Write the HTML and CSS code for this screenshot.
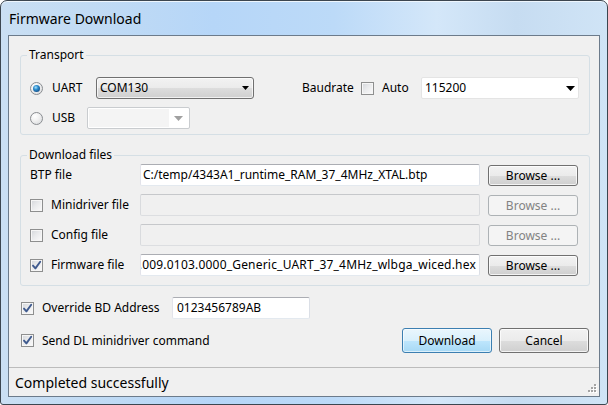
FILE: index.html
```html
<!DOCTYPE html>
<html>
<head>
<meta charset="utf-8">
<title>Firmware Download</title>
<link rel="stylesheet" href="styles.css">
</head>
<body>
<div class="window">
  <div class="titlebar"><span class="title">Firmware Download</span></div>
  <div class="client">
    <div class="content">
      <fieldset class="group transport">
        <legend>Transport</legend>
        <div class="inner">
          <div class="row">
            <span class="radio checked"></span>
            <span class="lbl lbl-uart">UART</span>
            <div class="combo combo-com"><span class="ctext">COM130</span><svg class="arrow" width="7" height="4" viewBox="0 0 7 4"><path d="M0 0h7L3.5 4z" fill="#000"/></svg></div>
            <span class="spacer"></span>
            <span class="lbl lbl-baud">Baudrate</span>
            <span class="check"></span>
            <span class="lbl lbl-auto">Auto</span>
            <div class="combo combo-edit"><span class="ctext">115200</span><svg class="arrow" width="9" height="5" viewBox="0 0 9 5"><path d="M0 0h9L4.5 5z" fill="#000"/></svg></div>
          </div>
          <div class="row">
            <span class="radio"></span>
            <span class="lbl lbl-usb">USB</span>
            <div class="combo combo-dis"><span class="cfield"></span><span class="cbtn"><svg width="9" height="5" viewBox="0 0 9 5"><path d="M0 0h9L4.5 5z" fill="#a0a0a0"/></svg></span></div>
          </div>
        </div>
      </fieldset>

      <fieldset class="group files">
        <legend>Download files</legend>
        <div class="inner">
          <div class="row">
            <span class="flabel"><span class="lbl">BTP file</span></span>
            <div class="input">C:/temp/4343A1_runtime_RAM_37_4MHz_XTAL.btp</div>
            <button class="btn">Browse ...</button>
          </div>
          <div class="row">
            <span class="flabel"><span class="check"></span><span class="lbl">Minidriver file</span></span>
            <div class="input disabled"></div>
            <button class="btn" disabled>Browse ...</button>
          </div>
          <div class="row">
            <span class="flabel"><span class="check"></span><span class="lbl">Config file</span></span>
            <div class="input disabled"></div>
            <button class="btn" disabled>Browse ...</button>
          </div>
          <div class="row">
            <span class="flabel"><span class="check checked"><svg width="11" height="11" viewBox="0 0 11 11"><path d="M2 5.6 4.4 8.4 9.2 1.8" fill="none" stroke="#3f5a8e" stroke-width="1.9" stroke-linejoin="round" stroke-linecap="round"/></svg></span><span class="lbl">Firmware file</span></span>
            <div class="input scrolled"><span>001.009.0103.0000_Generic_UART_37_4MHz_wlbga_wiced.hex</span></div>
            <button class="btn">Browse ...</button>
          </div>
        </div>
      </fieldset>

      <div class="row opt">
        <span class="check checked"><svg width="11" height="11" viewBox="0 0 11 11"><path d="M2 5.6 4.4 8.4 9.2 1.8" fill="none" stroke="#3f5a8e" stroke-width="1.9" stroke-linejoin="round" stroke-linecap="round"/></svg></span>
        <span class="lbl lbl-override">Override BD Address</span>
        <div class="input bd">0123456789AB</div>
      </div>

      <div class="row actions">
        <span class="check checked"><svg width="11" height="11" viewBox="0 0 11 11"><path d="M2 5.6 4.4 8.4 9.2 1.8" fill="none" stroke="#3f5a8e" stroke-width="1.9" stroke-linejoin="round" stroke-linecap="round"/></svg></span>
        <span class="lbl">Send DL minidriver command</span>
        <span class="spacer"></span>
        <button class="btn big default">Download</button>
        <button class="btn big">Cancel</button>
      </div>
    </div>
    <div class="statusbar">
      <span class="status">Completed successfully</span>
      <svg class="grip" width="12" height="12" viewBox="0 0 12 12">
        <g fill="#fff"><rect x="10" y="2" width="2" height="2"/><rect x="7" y="5" width="2" height="2"/><rect x="10" y="5" width="2" height="2"/><rect x="4" y="8" width="2" height="2"/><rect x="7" y="8" width="2" height="2"/><rect x="10" y="8" width="2" height="2"/></g>
        <g fill="#a3a3a3"><rect x="9" y="1" width="2" height="2"/><rect x="6" y="4" width="2" height="2"/><rect x="9" y="4" width="2" height="2"/><rect x="3" y="7" width="2" height="2"/><rect x="6" y="7" width="2" height="2"/><rect x="9" y="7" width="2" height="2"/></g>
      </svg>
    </div>
  </div>
</div>
</body>
</html>
```

FILE: styles.css
```css
html, body {
  margin: 0;
  padding: 0;
}
body {
  width: 608px;
  height: 405px;
  overflow: hidden;
  background: #ffffff;
  font-family: "Noto Sans", "Open Sans", sans-serif;
  font-size: 12px;
  color: #000;
}

.window {
  box-sizing: border-box;
  width: 608px;
  height: 405px;
  border: 1px solid #3c4650;
  border-radius: 7px 7px 3px 3px;
  background: linear-gradient(90deg, #cadff3 0%, #c1dbf4 15%, #b6d6f8 35%, #bcdaf8 55%, #d4e7f9 72%, #c6dcf1 85%, #d0e4f6 100%);
  padding: 0 7px 7px 7px;
  display: flex;
  flex-direction: column;
  box-shadow: inset 0 1px 0 #eef6fd;
}

.titlebar {
  height: 34px;
  display: flex;
  align-items: center;
  padding-left: 1px;
  font-size: 14px;
  color: #000;
  flex: none;
}

.client {
  flex: 1;
  min-height: 0;
  border: 1px solid #6c7b8b;
  background: #f0f0f0;
  display: flex;
  flex-direction: column;
}

.content {
  flex: 1;
  padding: 11px 9px 0 11px;
}

.group {
  margin: 0;
  padding: 0;
  min-width: 0;
  border: 1px solid #d5dfe5;
  border-radius: 3px;
}
.group legend {
  margin-left: 6px;
  padding: 0 2px;
  height: 16px;
  line-height: 16px;
}

.inner {
  display: flex;
  flex-direction: column;
  gap: 8px;
}
.transport .inner {
  padding: 14px 10px 5px 9px;
}
.files {
  margin-top: 12px;
}
.files .inner {
  padding: 1px 11px 9px 9px;
}

.row {
  display: flex;
  align-items: center;
  height: 22px;
}
.spacer {
  flex: 1;
}
.lbl {
  white-space: nowrap;
  line-height: 16px;
}

/* radio */
.radio {
  box-sizing: border-box;
  width: 13px;
  height: 13px;
  flex: none;
  border-radius: 50%;
  border: 1px solid #8a8d91;
  background: radial-gradient(circle at 35% 30%, #ffffff 0%, #f2f2f2 40%, #d4d6d9 100%);
  margin-right: 9px;
  display: flex;
  align-items: center;
  justify-content: center;
}
.radio.checked::after {
  content: "";
  width: 7px;
  height: 7px;
  border-radius: 50%;
  background: radial-gradient(circle at 40% 35%, #a9e2fb 0%, #2f8fcf 35%, #15528c 75%, #0b3764 100%);
}

/* checkbox */
.check {
  box-sizing: border-box;
  width: 13px;
  height: 13px;
  flex: none;
  border: 1px solid #8e8f8f;
  background: linear-gradient(135deg, #d3d6da 0%, #e9eaec 45%, #fbfbfb 100%);
  box-shadow: inset 0 0 0 1px #f6f6f6;
  margin-right: 8px;
  display: flex;
  align-items: center;
  justify-content: center;
}
.check svg {
  display: block;
}

.lbl-uart { width: 44px; }
.lbl-usb { width: 35px; }
.lbl-baud { width: 59px; }
.lbl-auto { width: 39px; }

/* combos */
.combo {
  box-sizing: border-box;
  height: 22px;
  display: flex;
  align-items: center;
  flex: none;
}
.combo .ctext {
  flex: 1;
  line-height: 16px;
}
.combo-com {
  width: 158px;
  border: 1px solid #707070;
  border-radius: 3px;
  background: linear-gradient(#f2f2f2 0%, #ebebeb 50%, #dddddd 51%, #cfcfcf 100%);
  box-shadow: inset 0 0 0 1px rgba(255,255,255,0.7);
  padding: 0 4px 0 3px;
}
.combo-edit {
  width: 158px;
  border: 1px solid #e4e4e4;
  border-radius: 2px;
  background: #fff;
  padding: 0 3px 0 3px;
}
.combo-dis {
  width: 103px;
  border: 1px solid #c9cccf;
  border-radius: 2px;
  background: #fff;
  padding: 1px;
}
.combo-dis .cfield {
  flex: 1;
  height: 100%;
  background: #f4f4f4;
}
.combo-dis .cbtn {
  width: 19px;
  height: 100%;
  display: flex;
  align-items: center;
  justify-content: center;
}

/* file rows */
.flabel {
  width: 110px;
  flex: none;
  display: flex;
  align-items: center;
}
.input {
  box-sizing: border-box;
  flex: 1;
  min-width: 0;
  height: 22px;
  border: 1px solid;
  border-color: #abadb3 #dbdfe6 #e3e9ef #e2e3ea;
  border-radius: 2px;
  background: #fff;
  padding: 0 3px 0 2px;
  line-height: 20px;
  white-space: nowrap;
  overflow: hidden;
}
.input.disabled {
  background: #f0f0f0;
  border-color: #c6c8cb #d9dbde #dcdee1 #d9dbde;
}
.input.scrolled {
  display: flex;
  justify-content: flex-end;
}
.input.scrolled span {
  flex: none;
  letter-spacing: 0.2px;
}

.btn {
  box-sizing: border-box;
  width: 90px;
  height: 21px;
  flex: none;
  margin: 0 0 0 8px;
  padding: 0;
  font-family: inherit;
  font-size: 12px;
  color: #000;
  border: 1px solid #707070;
  border-radius: 3px;
  background: linear-gradient(#f2f2f2 0%, #ebebeb 50%, #dddddd 51%, #cfcfcf 100%);
  box-shadow: inset 0 0 0 1px rgba(255,255,255,0.75);
  line-height: 17px;
}
.btn:disabled {
  color: #838383;
  border-color: #adb2b5;
  background: #f4f4f4;
  box-shadow: none;
}

/* bottom options */
.opt {
  margin-top: 11px;
  padding-left: 1px;
}
.lbl-override {
  width: 130px;
}
.input.bd {
  flex: none;
  width: 138px;
  padding-left: 4px;
}
.actions {
  margin-top: 9px;
  height: 25px;
  padding-left: 1px;
  margin-right: 1px;
}
.btn.big {
  height: 25px;
  line-height: 21px;
  margin-left: 7px;
}
.btn.default {
  border-color: #3c7fb1;
  background: linear-gradient(#eaf6fd 0%, #d9f0fc 50%, #bee6fd 51%, #a7d9f5 100%);
  box-shadow: inset 0 0 0 1px rgba(255,255,255,0.6);
}

/* status bar */
.statusbar {
  flex: none;
  box-sizing: content-box;
  height: 26px;
  border-top: 1px solid #bcbcbc;
  display: flex;
  align-items: center;
  padding: 2px 2px 0 6px;
}
.status {
  flex: 1;
  font-size: 14px;
  line-height: 20px;
}
.grip {
  align-self: flex-end;
  margin-bottom: 1px;
}
```
